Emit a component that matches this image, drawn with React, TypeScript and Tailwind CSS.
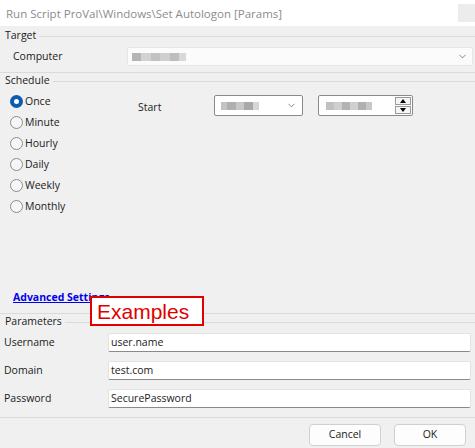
import { ChevronDown } from 'lucide-react';

const font = { fontFamily: '"Open Sans", "Noto Sans", sans-serif' };

function Blur({ widths }: { widths: { w: number; c: string }[] }) {
  return (
    <div className="flex h-[8px]">
      {widths.map((b, i) => (
        <div key={i} className="h-full" style={{ width: b.w, background: b.c }} />
      ))}
    </div>
  );
}

function Radio({ label, checked }: { label: string; checked?: boolean }) {
  return (
    <div className="flex h-[21px] items-center">
      {checked ? (
        <span className="w-[13px] h-[13px] rounded-full border-[4px] border-[#0a5cb0] bg-white" />
      ) : (
        <span className="w-[13px] h-[13px] rounded-full border border-[#8c8c8c] bg-[#f6f6f6]" />
      )}
      <span className="ml-[2px] text-[10.5px] text-[#1b1b1b]">{label}</span>
    </div>
  );
}

function SectionHeader({ title }: { title: string }) {
  return (
    <div className="flex items-center h-[16px] pl-[5px]">
      <span className="text-[10.5px] text-[#1b1b1b]">{title}</span>
      <div className="flex-1 ml-[3px] h-px bg-[#dadada]" />
    </div>
  );
}

function Field({ label, value }: { label: string; value: string }) {
  return (
    <div className="flex items-center h-[19px]">
      <span className="w-[108px] pl-[4px] text-[10.5px] text-[#1b1b1b]">{label}</span>
      <div className="w-[363px] h-full bg-white border border-[#e2e2e2] border-b-[#8a8a8a] rounded-[2px] flex items-center pl-[2px] text-[10.5px] text-[#1b1b1b]">
        {value}
      </div>
    </div>
  );
}

export default function App() {
  return (
    <div className="relative w-[475px] h-[448px] bg-[#f0f0f0] overflow-hidden flex flex-col" style={font}>
      {/* Title bar */}
      <div className="h-[26px] bg-white flex justify-between shrink-0">
        <span className="pl-[6px] pt-[5px] text-[11.5px] text-[#8c8c8c]">
          Run Script ProVal\Windows\Set Autologon [Params]
        </span>
        <div className="w-[17px] h-[18px] mt-[4px] bg-[#ececec]" />
      </div>

      {/* Target */}
      <div className="mt-[2px]">
        <SectionHeader title="Target" />
      </div>
      <div className="flex items-center h-[19px] mt-[3px]">
        <span className="w-[127px] pl-[13px] text-[10.5px] text-[#1b1b1b]">Computer</span>
        <div className="w-[346px] h-full bg-[#fbfbfb] border border-[#e6e6e6] rounded-[2px] flex items-center justify-between pl-[4px] pr-[4px]">
          <Blur widths={[{ w: 9, c: '#b5b5b5' }, { w: 10, c: '#d2d2d2' }, { w: 9, c: '#c2c2c2' }, { w: 10, c: '#cfcfcf' }, { w: 9, c: '#bdbdbd' }, { w: 7, c: '#d8d8d8' }]} />
          <ChevronDown className="w-[11px] h-[11px] text-[#555]" strokeWidth={1.5} />
        </div>
      </div>
      <div className="mt-[6px] h-px bg-[#dadada]" />

      {/* Schedule */}
      <SectionHeader title="Schedule" />
      <div className="flex h-[199px] mt-[2px]">
        <div className="w-[128px] pl-[10px] flex flex-col">
          <Radio label="Once" checked />
          <Radio label="Minute" />
          <Radio label="Hourly" />
          <Radio label="Daily" />
          <Radio label="Weekly" />
          <Radio label="Monthly" />
        </div>
        <div className="flex items-start mt-[4px] h-[21px]">
          <span className="w-[86px] pl-[10px] pt-[5px] text-[10.5px] text-[#1b1b1b]">Start</span>
          <div className="w-[89px] h-[21px] bg-white border border-[#8a8a8a] rounded-[2px] flex items-center justify-between pl-[6px] pr-[5px]">
            <Blur widths={[{ w: 6, c: '#c4c4c4' }, { w: 9, c: '#b0b0b0' }, { w: 8, c: '#c8c8c8' }, { w: 9, c: '#a9a9a9' }, { w: 6, c: '#d6d6d6' }]} />
            <ChevronDown className="w-[11px] h-[11px] text-[#555]" strokeWidth={1.5} />
          </div>
          <div className="ml-[15px] w-[95px] h-[21px] bg-white border border-[#8a8a8a] rounded-[2px] flex items-center justify-between pl-[7px] pr-[1px]">
            <Blur widths={[{ w: 8, c: '#c0c0c0' }, { w: 8, c: '#cfcfcf' }, { w: 8, c: '#b3b3b3' }, { w: 8, c: '#d0d0d0' }, { w: 8, c: '#b0b0b0' }, { w: 6, c: '#c8c8c8' }]} />
            <div className="flex flex-col gap-px">
              <div className="w-[16px] h-[8px] border border-[#9a9a9a] bg-[#f5f5f5] flex items-center justify-center">
                <span className="w-0 h-0 border-l-[3px] border-r-[3px] border-b-[4px] border-l-transparent border-r-transparent border-b-black" />
              </div>
              <div className="w-[16px] h-[8px] border border-[#9a9a9a] bg-[#f5f5f5] flex items-center justify-center">
                <span className="w-0 h-0 border-l-[3px] border-r-[3px] border-t-[4px] border-l-transparent border-r-transparent border-t-black" />
              </div>
            </div>
          </div>
        </div>
      </div>

      {/* Advanced settings */}
      <div className="h-[16px] pl-[13px] flex items-center">
        <span className="text-[10.5px] font-bold text-[#0000ee] underline">Advanced Settings</span>
      </div>
      <div className="mt-[7px] h-px bg-[#dadada]" />

      {/* Parameters */}
      <SectionHeader title="Parameters" />
      <div className="flex flex-col gap-[9px] mt-[3px]">
        <Field label="Username" value="user.name" />
        <Field label="Domain" value="test.com" />
        <Field label="Password" value="SecurePassword" />
      </div>
      <div className="mt-[9px] h-px bg-[#dadada]" />

      {/* Buttons */}
      <div className="flex justify-end gap-[13px] pr-[9px] mt-[6px]">
        <button className="w-[72px] h-[22px] bg-[#fdfdfd] border border-[#d0d0d0] rounded-[4px] text-[10.5px] text-[#1b1b1b]">Cancel</button>
        <button className="w-[72px] h-[22px] bg-[#fdfdfd] border border-[#d0d0d0] rounded-[4px] text-[10.5px] text-[#1b1b1b]">OK</button>
      </div>

      {/* Examples callout */}
      <div
        className="absolute left-[90px] top-[296px] w-[114px] h-[30px] bg-white border-2 border-[#e00000] flex items-center pl-[5px] text-[21px] leading-none text-[#e00000]"
        style={{ fontFamily: '"Liberation Sans", Arial, sans-serif' }}
      >
        Examples
      </div>
    </div>
  );
}
